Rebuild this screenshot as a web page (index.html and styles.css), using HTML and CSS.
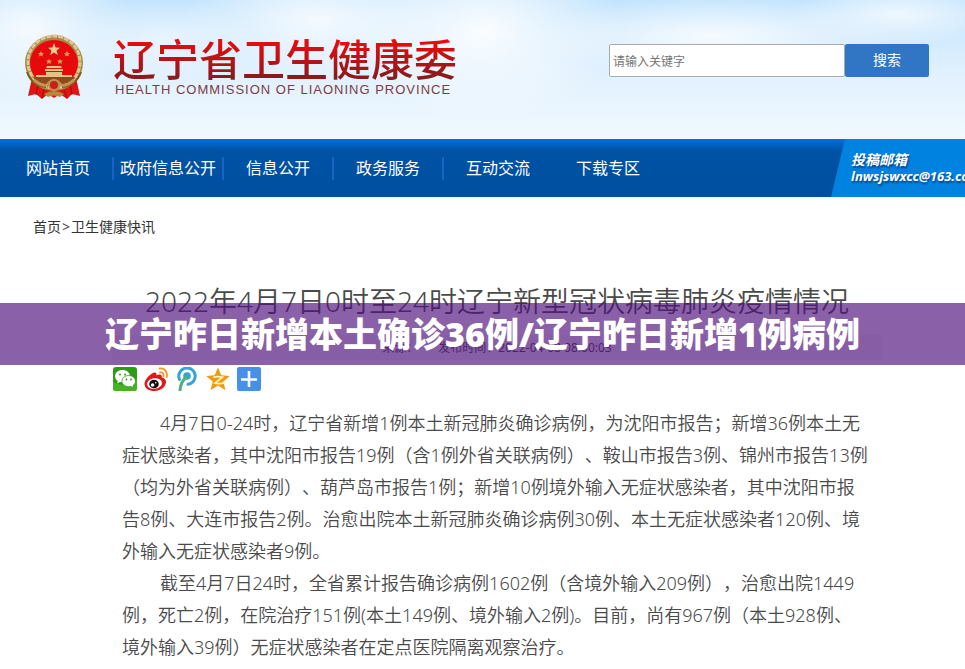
FILE: index.html
```html
<!DOCTYPE html>
<html lang="zh-CN">
<head>
    <meta charset="UTF-8">
    <title>辽宁省卫生健康委</title>
    <meta name="viewport" content="width=device-width, initial-scale=1.0">
    <link rel="stylesheet" href="styles.css">
</head>
<body>
    <header class="header">
        <a class="logo" href="#">
            <svg class="emblem" viewBox="0 0 60 66" aria-hidden="true">
                <path d="M8 44 L4 62 L12 60 L18 65 L24 60 L30 64 L36 60 L43 65 L48 60 L56 62 L52 44 Z" fill="#e01410"/>
                <path d="M14 50 L12 61 M46 50 L48 61 M20 56 L18 64 M40 56 L43 64" stroke="#9c0d08" stroke-width="1"/>
                <ellipse cx="30" cy="29" rx="29" ry="28" fill="#a8874a"/>
                <ellipse cx="30" cy="28" rx="26" ry="26" fill="none" stroke="#dcc890" stroke-width="3" stroke-dasharray="5 1"/>
                <path d="M3 38 Q8 52 22 53 M57 38 Q52 52 38 53" fill="none" stroke="#7a5a22" stroke-width="2"/>
                <ellipse cx="30" cy="29" rx="24" ry="23" fill="#e60a0c"/>
                <path d="M30 9 L31.600 13.500 L36 13.700 L32.500 16.500 L33.800 21 L30 18.400 L26.200 21 L27.500 16.500 L24 13.700 L28.400 13.500 Z" fill="#e8cf8e"/>
                <path d="M17 17l1 2h2l-1.500 1.500 .5 2-2-1-2 1 .5-2L14 19h2zM43 17l1 2h2l-1.500 1.500 .5 2-2-1-2 1 .5-2L40 19h2zM25 25l1 1.500h2l-1.500 1.500 .5 2-2-1-2 1 .5-2L22 26.500h2zM36 25l1 1.500h2l-1.500 1.500 .5 2-2-1-2 1 .5-2L33 26.500h2z" fill="#cf9a50"/>
                <path d="M23 32h14l1 2H22zM21 35h18v2H21zM22 38h16v3H22zM12 41h36v2H12z" fill="#e0c488"/>
                <path d="M9 43h42l-4 6H13z" fill="#8d4a1a"/>
                <path d="M10 46 Q20 54 24 50 Q30 43 36 50 Q40 54 50 46" fill="none" stroke="#bf9650" stroke-width="3"/>
                <circle cx="30" cy="51" r="5" fill="#c92015" stroke="#b8924c" stroke-width="2"/>
                <path d="M20 60 Q30 54 40 60 L36 63 Q30 60 24 63 Z" fill="#b98735"/>
            </svg>
            <span class="logo-text">
                <span class="logo-cn">辽宁省卫生健康委</span>
                <span class="logo-en">HEALTH COMMISSION OF LIAONING PROVINCE</span>
            </span>
        </a>
        <form class="search">
            <input class="search-input" type="text" placeholder="请输入关键字" aria-label="请输入关键字">
            <button class="search-btn" type="submit">搜索</button>
        </form>
    </header>

    <nav class="nav">
        <ul class="menu">
            <li><a href="#">网站首页</a></li>
            <li><a href="#">政府信息公开</a></li>
            <li><a href="#">信息公开</a></li>
            <li><a href="#">政务服务</a></li>
            <li><a href="#">互动交流</a></li>
            <li><a href="#">下载专区</a></li>
        </ul>
        <a class="mail" href="#">
            <span>投稿邮箱</span>
            <span>lnwsjswxcc@163.com</span>
        </a>
    </nav>

    <div class="crumbs">
        <a href="#">首页</a><span>&gt;</span><a href="#">卫生健康快讯</a>
    </div>

    <main class="article">
        <h1 class="title">2022年4月7日0时至24时辽宁新型冠状病毒肺炎疫情情况</h1>
        <p class="meta"><span>来源：</span><span>发布时间：2022-04-08 08:00:03</span></p>
        <div class="banner">辽宁昨日新增本土确诊36例/辽宁昨日新增1例病例</div>

        <div class="share">
            <a href="#" aria-label="微信">
                <svg viewBox="0 0 24 24">
                    <rect width="24" height="24" rx="3" fill="#2f9a16"/>
                    <path d="M0 15 Q12 22 24 12 V21 a3 3 0 0 1-3 3 H3 a3 3 0 0 1-3-3z" fill="#45b51f"/>
                    <path d="M9.500 3c-4.200 0-7.500 2.700-7.500 6.200 0 2 1.100 3.700 2.800 4.800l-.7 2.500 2.900-1.400c.8.2 1.600.3 2.500.3 4.200 0 7.500-2.700 7.500-6.200S13.700 3 9.500 3z" fill="#fff"/>
                    <path d="M15.700 8.500c-3.800 0-6.800 2.500-6.800 5.600s3 5.600 6.800 5.600c.8 0 1.500-.1 2.200-.3l2.700 1.500-.6-2.300c1.500-1 2.500-2.600 2.500-4.500 0-3.100-3-5.600-6.800-5.600z" fill="#fff" stroke="#2f9a16" stroke-width=".8"/>
                    <g fill="#2f9a16"><circle cx="7" cy="7.500" r="1"/><circle cx="12" cy="7.500" r="1"/><circle cx="13.500" cy="12.500" r=".9"/><circle cx="18" cy="12.500" r=".9"/></g>
                </svg>
            </a>
            <a href="#" aria-label="新浪微博">
                <svg viewBox="0 0 24 24">
                    <path d="M9 6c2-1 4-.5 3.500 2.200 3-1.200 6-1 5.200 2 3 .8 4.500 2.600 4.300 5C21.600 20 16.500 24 10.500 24 5 24 .5 21.500.5 17 .5 13 5 7.800 9 6z" fill="#dc1c1c"/>
                    <ellipse cx="10.500" cy="16.500" rx="7.500" ry="5.200" fill="#fff" transform="rotate(-8 10.500 16.500)"/>
                    <ellipse cx="10" cy="17" rx="4.800" ry="4.300" fill="#111"/>
                    <circle cx="8.600" cy="18" r="1.800" fill="#fff"/><circle cx="11.800" cy="15.800" r=".8" fill="#fff"/>
                    <path d="M15.500 1.500c4.500-1 8.500 3 7.200 8.500M16 5.500c2.500-.5 4 1.500 3.500 3.800" fill="none" stroke="#f39a1e" stroke-width="1.800" stroke-linecap="round"/>
                </svg>
            </a>
            <a href="#" aria-label="腾讯微博">
                <svg viewBox="0 0 24 24">
                    <path d="M4.500 12.500A8.200 8.200 0 1 1 13 17.300" fill="none" stroke="#35a3d8" stroke-width="3" stroke-linecap="round"/>
                    <circle cx="12" cy="9" r="3.800" fill="#35a3d8"/>
                    <path d="M11.500 10C7.500 13 5.500 17.500 5 23" fill="none" stroke="#4eb07c" stroke-width="3" stroke-linecap="round"/>
                </svg>
            </a>
            <a href="#" aria-label="QQ空间">
                <svg viewBox="0 0 24 24">
                    <path d="M12 .5l3.300 7.800 8.500.7-6.500 5.500 2.200 8.700L12 18.500l-7.500 4.700 2.200-8.700L.2 9l8.500-.7z" fill="#f09a12"/>
                    <path d="M7.500 10.200q4.500-1 9 0l-7.500 6q5 1.200 10.500-.8" fill="none" stroke="#fff3c4" stroke-width="1.700"/>
                </svg>
            </a>
            <a href="#" aria-label="更多分享">
                <svg viewBox="0 0 24 24">
                    <rect width="24" height="24" rx="2" fill="#4690ea"/>
                    <path d="M12 4v7M12 13v7M4 12.500h7M13 12.500h7" stroke="#fff" stroke-width="2.600"/>
                    <path d="M11 12.500h2M12 11v2" stroke="#fff" stroke-width="1.500"/>
                </svg>
            </a>
        </div>

        <div class="content">
            <p>4月7日0-24时，辽宁省新增1例本土新冠肺炎确诊病例，为沈阳市报告；新增36例本土无症状感染者，其中沈阳市报告19例（含1例外省关联病例）、鞍山市报告3例、锦州市报告13例（均为外省关联病例）、葫芦岛市报告1例；新增10例境外输入无症状感染者，其中沈阳市报告8例、大连市报告2例。治愈出院本土新冠肺炎确诊病例30例、本土无症状感染者120例、境外输入无症状感染者9例。</p>
            <p>截至4月7日24时，全省累计报告确诊病例1602例（含境外输入209例），治愈出院1449例，死亡2例，在院治疗151例(本土149例、境外输入2例)。目前，尚有967例（本土928例、<br>境外输入39例）无症状感染者在定点医院隔离观察治疗。</p>
        </div>
    </main>
</body>
</html>
```
FILE: styles.css
```css
* {
    box-sizing: border-box;
}

body {
    margin: 0;
    font-family: "Noto Sans", "Noto Sans CJK SC", sans-serif;
    font-size: 14px;
    color: #4a4a4a;
    background: #fff;
    overflow-x: hidden;
    text-spacing-trim: space-all;
}

a {
    color: inherit;
    text-decoration: none;
}

/* 页头 */
.header {
    display: flex;
    justify-content: space-between;
    align-items: flex-start;
    height: 139px;
    padding: 32px 36px 0 24px;
    background:
        radial-gradient(ellipse 110px 70px at 3% 20%, rgba(255, 255, 255, .8), transparent),
        radial-gradient(ellipse 90px 40px at 17% 28%, rgba(255, 255, 255, .5), transparent),
        radial-gradient(ellipse 140px 60px at 33% 14%, rgba(255, 255, 255, .8), transparent),
        radial-gradient(ellipse 140px 90px at 50% 22%, rgba(255, 255, 255, .9), transparent),
        radial-gradient(ellipse 180px 40px at 74% 26%, rgba(255, 255, 255, .8), transparent),
        radial-gradient(ellipse 110px 30px at 93% 10%, rgba(255, 255, 255, .7), transparent),
        linear-gradient(#c3e4fd, #dff0fe 50%, #f1f9fe);
}

.logo {
    display: flex;
    gap: 29px;
}

.emblem {
    width: 60px;
    height: 66px;
    margin-top: 2px;
}

.logo-text {
    display: flex;
    flex-direction: column;
}

.logo-cn {
    font-family: "Noto Sans CJK SC", sans-serif;
    font-size: 43px;
    font-weight: 500;
    line-height: 50px;
    background: linear-gradient(#e80c0c 20%, #8a1a1c 90%);
    background-clip: text;
    color: transparent;
}

.logo-en {
    font-family: "Liberation Sans", sans-serif;
    font-size: 13px;
    line-height: 16px;
    letter-spacing: 1px;
    padding-left: 2px;
    color: #7d3b42;
}

.search {
    display: flex;
    width: 320px;
    margin-top: 12px;
}

.search-input {
    flex: 1;
    min-width: 0;
    height: 33px;
    padding: 2px 3px 0;
    border: 1px solid #aaa;
    border-radius: 2px;
    font-family: inherit;
    font-size: 12px;
}

.search-btn {
    width: 84px;
    height: 33px;
    padding: 0 0 3px;
    border: none;
    border-radius: 2px;
    background: #3176c4;
    color: #fff;
    font-family: inherit;
    font-size: 14px;
}

/* 导航 */
.nav {
    display: flex;
    justify-content: space-between;
    height: 58px;
    background: linear-gradient(#0070dc, #0052a4 20%, #004fa0);
    overflow: hidden;
}

.menu {
    display: flex;
    align-items: center;
    margin: 0;
    padding: 0 0 0 2px;
    list-style: none;
}

.menu li {
    width: 110px;
    font-size: 16px;
    line-height: 23px;
    text-align: center;
    white-space: nowrap;
    color: #fff;
    border-left: 2px solid #1b62c6;
}

.menu li:first-child,
.menu li:last-child {
    border-left-color: transparent;
}

.mail {
    display: flex;
    flex-direction: column;
    justify-content: center;
    width: 134px;
    padding-left: 20px;
    background: #0083e0;
    clip-path: polygon(14px 0, 100% 0, 100% 100%, 0 100%);
    color: #fff;
    font-size: 14px;
    font-weight: bold;
    font-style: italic;
    line-height: 16px;
    white-space: nowrap;
    text-shadow: 1px 2px 2px #0a3f80;
}

.mail span:last-child {
    font-size: 13px;
}

.crumbs {
    display: flex;
    gap: 1px;
    padding: 20px 33px;
    line-height: 20px;
}

.crumbs a {
    color: #333;
}

/* 正文 */
.article {
    position: relative;
    padding: 0 93px 0 122px;
}

.title {
    margin: 0;
    padding-top: 24px;
    font-size: 28px;
    font-weight: 350;
    line-height: 40px;
    text-align: center;
    white-space: nowrap;
}

.meta {
    display: flex;
    justify-content: center;
    gap: 20px;
    margin: 14px -10px 0;
    background: #f5f5f5;
    font-size: 12px;
    line-height: 25px;
}

/* 横幅盖在标题下半部分 */
.banner {
    position: absolute;
    top: 46px;
    left: 0;
    right: 0;
    background: rgba(78, 15, 123, .66);
    color: #fff;
    font-size: 34px;
    font-weight: 900;
    line-height: 62px;
    text-align: center;
    white-space: nowrap;
}

.share {
    display: flex;
    gap: 7px;
    margin: 7px -9px 0;
}

.share a,
.share svg {
    display: block;
    width: 24px;
    height: 24px;
}

.content {
    padding-top: 16px;
    font-size: 18px;
    font-weight: 350;
    line-height: 32px;
}

.content p {
    margin: 0;
    text-indent: 38px;
}
```
